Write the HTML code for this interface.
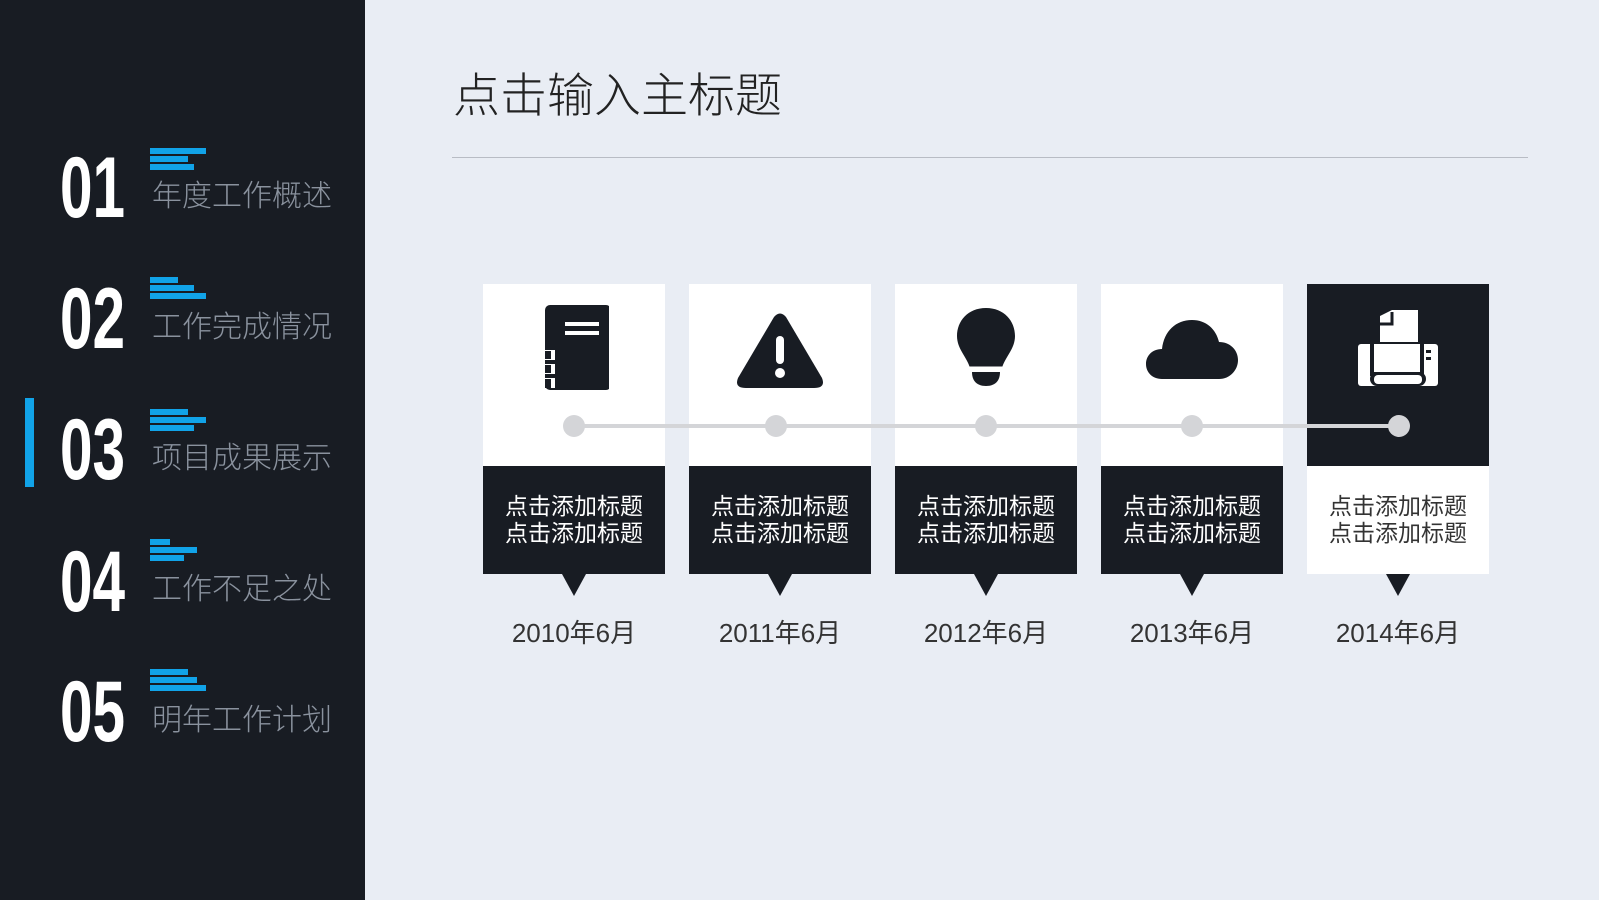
<!DOCTYPE html><html><head><meta charset="utf-8"><style>
body{margin:0;width:1599px;height:900px;background:#e9edf4;position:relative;overflow:hidden;font-family:"Liberation Sans","Noto Sans CJK SC",sans-serif}
.side{position:absolute;left:0;top:0;width:365px;height:900px;background:#181c23}
.num{position:absolute;left:60px;font-family:"Liberation Sans Narrow","Liberation Sans",sans-serif;font-weight:bold;color:#fff;font-size:86px;line-height:1;transform:scaleX(.68);transform-origin:left top}
.bars{position:absolute;left:150px}
.bars i{display:block;height:6px;background:#11a3e8;margin-bottom:2px}
.lab{position:absolute;left:152px;color:#8a929e;font-size:30px;line-height:1;font-weight:300}
.title{position:absolute;left:453px;top:72px;font-size:47px;color:#222;line-height:1;font-weight:300}
.hr{position:absolute;left:452px;top:157px;width:1076px;height:1px;background:#b8bcc4}
.card{position:absolute;top:284px;width:182px;height:290px}
.top{height:182px;background:#fff;position:relative}
.bot{height:108px;background:#181c23;color:#fff;font-size:23px;line-height:27px;text-align:center;padding-top:27px;box-sizing:border-box;position:relative}
.bot:after{content:"";position:absolute;left:79px;bottom:-22px;border-left:12px solid transparent;border-right:12px solid transparent;border-top:22px solid #181c23}
.card.act .top{background:#181c23}.card.act .bot{background:#fff;color:#333}
.date{position:absolute;top:613px;width:182px;text-align:center;font-size:26px;color:#333}
.ic{position:absolute;left:50%;top:20px;transform:translateX(-50%)}
.line{position:absolute;left:574px;top:424px;width:826px;height:4px;background:#d4d5d8}
.dot{position:absolute;top:415px;width:22px;height:22px;border-radius:50%;background:#d4d5d8}
</style></head><body>
<div class="side">
<div style="position:absolute;left:25px;top:398px;width:9px;height:89px;background:#11a3e8"></div>
<div class="num" style="top:145px">01</div><div class="bars" style="top:148px"><i style="width:56px"></i><i style="width:38px"></i><i style="width:44px"></i></div><div class="lab" style="top:182px">年度工作概述</div>
<div class="num" style="top:276px">02</div><div class="bars" style="top:277px"><i style="width:28px"></i><i style="width:44px"></i><i style="width:56px"></i></div><div class="lab" style="top:313px">工作完成情况</div>
<div class="num" style="top:407px">03</div><div class="bars" style="top:409px"><i style="width:38px"></i><i style="width:56px"></i><i style="width:44px"></i></div><div class="lab" style="top:444px">项目成果展示</div>
<div class="num" style="top:539px">04</div><div class="bars" style="top:539px"><i style="width:20px"></i><i style="width:47px"></i><i style="width:34px"></i></div><div class="lab" style="top:575px">工作不足之处</div>
<div class="num" style="top:669px">05</div><div class="bars" style="top:669px"><i style="width:38px"></i><i style="width:47px"></i><i style="width:56px"></i></div><div class="lab" style="top:706px">明年工作计划</div>
</div>
<div class="title">点击输入主标题</div><div class="hr"></div>

<div class="card" style="left:483px"><div class="top"><svg class="ic" width="70" height="90" viewBox="0 0 70 90"><rect x="6" y="1" width="66" height="85" rx="5" fill="#181c23"/><rect x="26" y="18" width="34" height="4" fill="#fff"/><rect x="26" y="27" width="34" height="4" fill="#fff"/><rect x="4" y="46" width="12" height="10" fill="#fff"/><rect x="4" y="60" width="12" height="10" fill="#fff"/><rect x="4" y="74" width="12" height="10" fill="#fff"/><rect x="6" y="47" width="6" height="8" fill="#181c23"/><rect x="6" y="61" width="6" height="8" fill="#181c23"/><rect x="6" y="75" width="6" height="9" fill="#181c23"/></svg></div><div class="bot">点击添加标题<br>点击添加标题</div></div>
<div class="card" style="left:689px"><div class="top"><svg class="ic" width="92" height="80" viewBox="0 0 92 80" style="top:28px"><path d="M40 5Q46-2 52 5L88 66Q92 76 80 76H12Q0 76 4 66Z" fill="#181c23"/><rect x="42" y="24" width="8" height="28" rx="4" fill="#fff"/><circle cx="46" cy="61" r="5" fill="#fff"/></svg></div><div class="bot">点击添加标题<br>点击添加标题</div></div>
<div class="card" style="left:895px"><div class="top"><svg class="ic" width="64" height="86" viewBox="0 0 64 86" style="top:22px"><path d="M32 2C14 2 3 15 3 30c0 13 10 21 13 32h32c3-11 13-19 13-32C61 15 50 2 32 2Z" fill="#181c23"/><path d="M18 66h28c0 10-6 14-14 14s-14-4-14-14Z" fill="#181c23"/><path d="M14 62h36" stroke="#fff" stroke-width="3"/></svg></div><div class="bot">点击添加标题<br>点击添加标题</div></div>
<div class="card" style="left:1101px"><div class="top"><svg class="ic" width="96" height="62" viewBox="0 0 96 62" style="top:34px"><path d="M18 61C8 61 2 54 2 46s6-15 16-15C20 13 32 2 48 2c14 0 24 9 27 22c11 0 19 8 19 18s-8 19-19 19Z" fill="#181c23"/></svg></div><div class="bot">点击添加标题<br>点击添加标题</div></div>
<div class="card act" style="left:1307px"><div class="top"><svg class="ic" width="84" height="80" viewBox="0 0 84 80" style="top:26px"><path d="M24 6L36 0H62V32H24Z" fill="#fff"/><path d="M24 14L36 14L36 2" stroke="#181c23" stroke-width="3" fill="none"/><rect x="2" y="34" width="80" height="42" rx="3" fill="#fff"/><rect x="14" y="32" width="54" height="34" fill="#181c23"/><rect x="18" y="34" width="46" height="28" fill="#fff"/><rect x="14" y="62" width="56" height="14" rx="7" fill="#181c23"/><rect x="18" y="65" width="48" height="9" rx="4" fill="#fff"/><rect x="70" y="40" width="5" height="3" fill="#181c23"/><rect x="70" y="47" width="5" height="3" fill="#181c23"/></svg></div><div class="bot">点击添加标题<br>点击添加标题</div></div>
<div class="line"></div>
<div class="dot" style="left:563px"></div><div class="dot" style="left:765px"></div><div class="dot" style="left:975px"></div><div class="dot" style="left:1181px"></div><div class="dot" style="left:1388px"></div>
<div class="date" style="left:483px">2010年6月</div><div class="date" style="left:689px">2011年6月</div><div class="date" style="left:895px">2012年6月</div><div class="date" style="left:1101px">2013年6月</div><div class="date" style="left:1307px">2014年6月</div>
</body></html>
